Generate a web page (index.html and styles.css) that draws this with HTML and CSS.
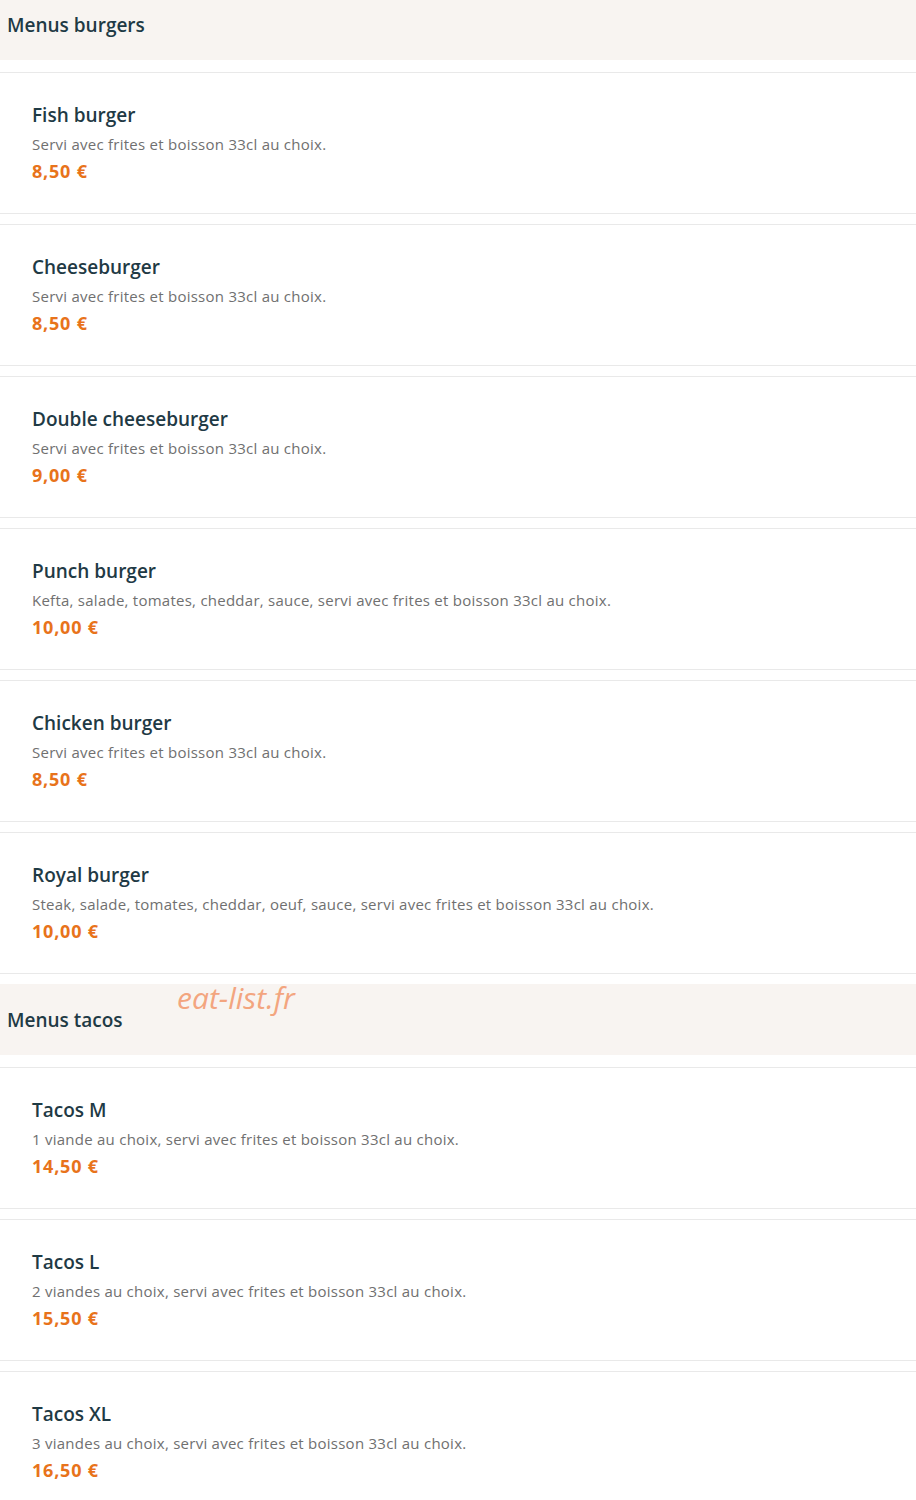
FILE: index.html
```html
<!DOCTYPE html>
<html lang="fr">
<head>
<meta charset="utf-8">
<title>Menus</title>
<link rel="stylesheet" href="styles.css">
</head>
<body>
<div class="page">
  <section class="category">
    <h2 class="category-title">Menus burgers</h2>
    <article class="item">
      <h3 class="item-name">Fish burger</h3>
      <p class="item-desc">Servi avec frites et boisson 33cl au choix.</p>
      <p class="item-price">8,50 €</p>
    </article>
    <article class="item">
      <h3 class="item-name">Cheeseburger</h3>
      <p class="item-desc">Servi avec frites et boisson 33cl au choix.</p>
      <p class="item-price">8,50 €</p>
    </article>
    <article class="item">
      <h3 class="item-name">Double cheeseburger</h3>
      <p class="item-desc">Servi avec frites et boisson 33cl au choix.</p>
      <p class="item-price">9,00 €</p>
    </article>
    <article class="item">
      <h3 class="item-name">Punch burger</h3>
      <p class="item-desc">Kefta, salade, tomates, cheddar, sauce, servi avec frites et boisson 33cl au choix.</p>
      <p class="item-price">10,00 €</p>
    </article>
    <article class="item">
      <h3 class="item-name">Chicken burger</h3>
      <p class="item-desc">Servi avec frites et boisson 33cl au choix.</p>
      <p class="item-price">8,50 €</p>
    </article>
    <article class="item">
      <h3 class="item-name">Royal burger</h3>
      <p class="item-desc">Steak, salade, tomates, cheddar, oeuf, sauce, servi avec frites et boisson 33cl au choix.</p>
      <p class="item-price">10,00 €</p>
    </article>
  </section>
  <section class="category">
    <h2 class="category-title">Menus tacos</h2>
    <span class="watermark">eat-list.fr</span>
    <article class="item">
      <h3 class="item-name">Tacos M</h3>
      <p class="item-desc">1 viande au choix, servi avec frites et boisson 33cl au choix.</p>
      <p class="item-price">14,50 €</p>
    </article>
    <article class="item">
      <h3 class="item-name">Tacos L</h3>
      <p class="item-desc">2 viandes au choix, servi avec frites et boisson 33cl au choix.</p>
      <p class="item-price">15,50 €</p>
    </article>
    <article class="item">
      <h3 class="item-name">Tacos XL</h3>
      <p class="item-desc">3 viandes au choix, servi avec frites et boisson 33cl au choix.</p>
      <p class="item-price">16,50 €</p>
    </article>
  </section>
</div>
</body>
</html>
```

FILE: styles.css
```css
html, body {
  margin: 0;
  padding: 0;
  background: #ffffff;
}

body {
  font-family: "Open Sans", "Noto Sans", sans-serif;
  color: #1f3a45;
}

.page {
  margin-top: -11px;
}

.category {
  position: relative;
}

.category-title {
  margin: 0 0 12px 0;
  height: 71px;
  display: flex;
  align-items: center;
  padding-left: 7px;
  background: #f8f4f1;
  font-size: 19px;
  font-weight: 600;
  color: #1f3a45;
}

.item {
  box-sizing: border-box;
  height: 142px;
  margin-bottom: 10px;
  border-top: 1px solid #e9e9e9;
  border-bottom: 1px solid #e9e9e9;
  padding: 30px 32px 0 32px;
  display: flex;
  flex-direction: column;
}

.item-name {
  margin: 0;
  font-size: 19px;
  font-weight: 600;
  line-height: 24px;
  color: #1f3a45;
}

.item-desc {
  margin: 7px 0 0 0;
  font-size: 15px;
  letter-spacing: 0.25px;
  line-height: 20px;
  color: #707070;
}

.item-price {
  margin: 6px 0 0 0;
  font-size: 18px;
  letter-spacing: 0.8px;
  font-weight: 700;
  line-height: 22px;
  color: #e8731b;
}

.watermark {
  position: absolute;
  left: 177px;
  top: -7px;
  font-family: "Open Sans", sans-serif;
  font-style: italic;
  font-size: 30px;
  color: #f3a57f;
}
```
